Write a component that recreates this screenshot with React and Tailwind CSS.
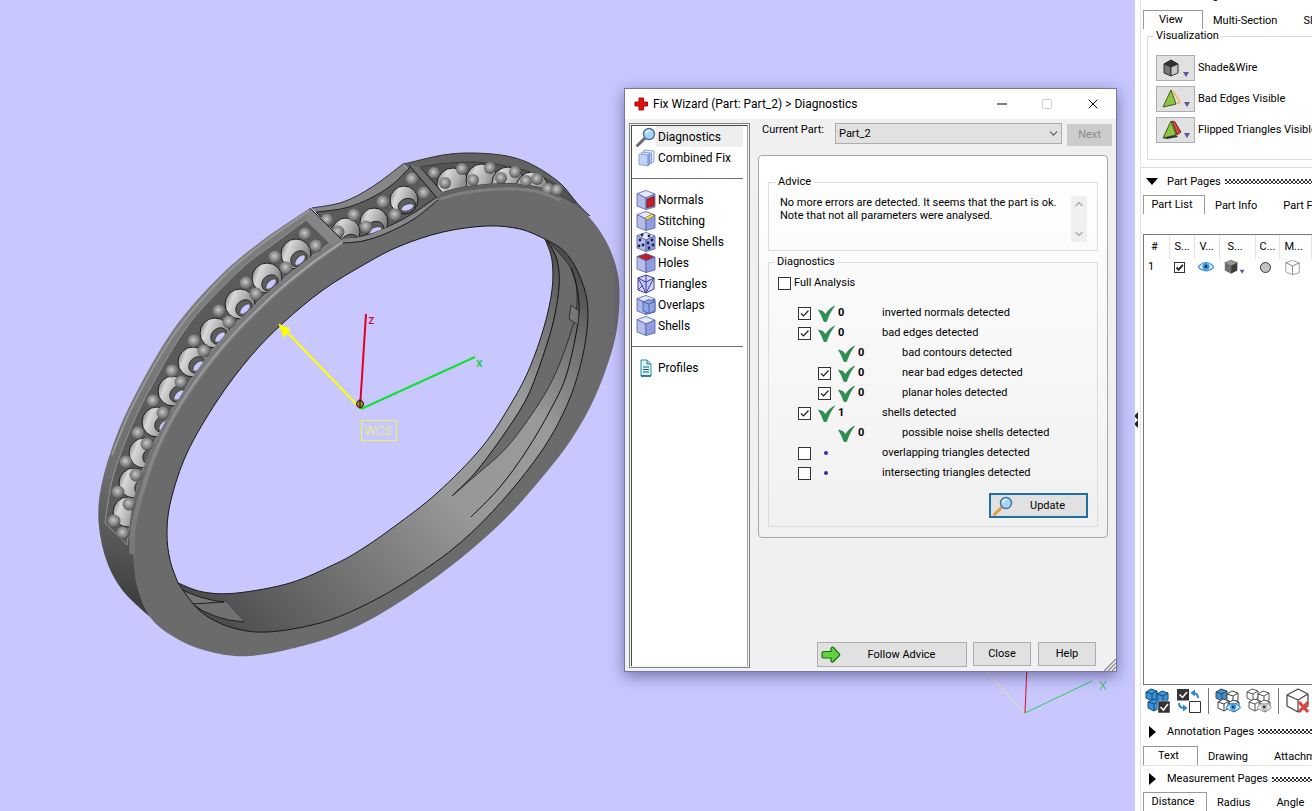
import React, { useState } from "react";
import { ChevronDown, ChevronUp, Minus, Square, X } from "lucide-react";
import clsx from "clsx";

// Smooth cubic segments through a list of [x, y] points
const spline = (pts) => {
  let d = "";
  for (let i = 0; i < pts.length - 1; i++) {
    const p0 = pts[i - 1] || pts[i];
    const p1 = pts[i];
    const p2 = pts[i + 1];
    const p3 = pts[i + 2] || p2;
    d += `C${p1[0] + (p2[0] - p0[0]) / 6} ${p1[1] + (p2[1] - p0[1]) / 6} ${p2[0] - (p3[0] - p1[0]) / 6} ${p2[1] - (p3[1] - p1[1]) / 6} ${p2[0]} ${p2[1]}`;
  }
  return d;
};

const open = (...parts) => `M${parts[0][0].join(" ")}` + parts.map((p, i) => (i ? `L${p[0].join(" ")}` : "") + spline(p)).join("");
const closed = (...parts) => open(...parts) + "Z";

const silhouetteLeft = [[150, 617], [123, 591], [107, 562], [99, 527], [100, 493], [111, 451], [132, 401], [173, 330], [220, 276], [263, 240], [310, 208]];
const scallopTop = [[312, 208], [343, 202], [372, 187], [403, 164]];
const silhouetteTop = [[408, 163], [443, 155], [473, 153], [507, 156], [533, 165], [560, 183], [577, 203], [590, 216]];

const faceLeft = [[133, 555], [134, 530], [141, 500], [158, 450], [186, 398], [225, 346], [270, 300], [308, 268], [343, 243]];
const faceScallop = [[343, 243], [363, 241], [387, 233], [414, 219], [438, 200]];
const faceRight = [[438, 200], [463, 192], [500, 188], [535, 190], [567, 202], [588, 216], [607, 243], [618, 275], [619, 310], [613, 347], [595, 397], [571, 440], [540, 480], [504, 520], [460, 559], [412, 594], [360, 625], [310, 644], [250, 656], [207, 651], [174, 637], [150, 617], [137, 586], [133, 555]];

const innerLeft = [[178, 583], [170, 560], [167, 533], [171, 500], [187, 453], [217, 401], [250, 357], [283, 323], [323, 290], [365, 264], [400, 246], [443, 232], [487, 226], [520, 229], [545, 239]];
const innerRight = [[545, 239], [564, 251], [578, 272], [587, 300], [587, 330], [580, 367], [567, 405], [543, 449], [503, 500], [460, 543], [412, 578], [365, 605], [320, 623], [267, 632], [230, 627], [200, 611], [178, 583]];
const backEdge = [[545, 239], [552, 260], [552, 290], [544, 327], [530, 367], [512, 402], [482, 447], [437, 493], [395, 526], [362, 549], [335, 564], [290, 583], [237, 593], [203, 592], [178, 583]];

const grooveA = [[547, 240], [557, 260], [559, 287], [552, 327], [536, 376], [523, 405], [500, 440], [475, 473], [452, 496]];
const grooveB = [[452, 496], [475, 476], [507, 447], [538, 405], [557, 370], [573, 325], [577, 300], [572, 270], [547, 240]];
const grooveC = [[571, 268], [578, 293], [578, 322], [567, 373], [552, 407], [527, 450], [500, 487], [471, 517]];

const channelLeft = closed(
  [[105, 523], [113, 477], [130, 430], [152, 385], [190, 323], [240, 270], [275, 243], [306, 220]],
  [[330, 243], [303, 263], [262, 298], [217, 344], [181, 395], [152, 447], [134, 497], [127, 545]],
);
const channelMid = closed(
  [[316, 212], [345, 208], [371, 198], [393, 184], [411, 166]],
  [[437, 197], [412, 214], [387, 227], [362, 236], [343, 238]],
);
const channelRight = closed(
  [[420, 167], [440, 164], [470, 162], [500, 165], [533, 173], [560, 187], [577, 203]],
  [[573, 202], [547, 189], [510, 183], [467, 186], [442, 192]],
);

const beadsLeft = [[305, 234], [275, 257], [246, 283], [219, 311], [194, 341], [172, 371], [153, 401], [138, 433], [126, 462], [118, 492], [114, 521], [316, 246], [286, 268], [256, 294], [229, 322], [204, 351], [181, 382], [163, 413], [147, 444], [136, 475], [129, 504], [123, 533]];
const beadsMid = [[327, 220], [338, 232], [354, 215], [366, 227], [383, 202], [395, 215], [412, 179], [424, 193]];
const beadsRight = [[434, 173], [445, 183], [462, 169], [473, 180], [490, 168], [501, 178], [515, 172], [526, 181], [537, 179], [548, 189], [557, 190]];

// seat centre, then the drilled hole
const seatsLeft = [[296, 254, 299, 259], [267, 278, 270, 283], [240, 304, 244, 308], [215, 333, 219, 336], [193, 362, 197, 365], [173, 391, 178, 394], [157, 422, 163, 424], [144, 453, 151, 456], [134, 483, 143, 487], [128, 512, 140, 517]];
const seatsMid = [[346, 232, 350, 242], [374, 222, 375, 229], [404, 200, 407, 206]];
const seatsRight = [[453, 184, 451, 200], [482, 180, 482, 200], [508, 183, 508, 200], [532, 188, 534, 202]];

const Seats = ({ seats, r = 14, tilt = -40 }) =>
  seats.map(([x, y, hx, hy]) => (
    <g key={`${x}-${y}`}>
      <circle cx={x} cy={y} r={r} fill="url(#seat)" stroke="#1c1c1c" strokeWidth="1" />
      <g transform={`translate(${hx} ${hy}) rotate(${tilt})`}>
        <ellipse rx="9" ry="7.5" fill="#5c5c5c" stroke="#1c1c1c" strokeWidth="0.8" />
        <ellipse cx="0" cy="1.5" rx="6.5" ry="3.2" fill="#c8c8ff" stroke="#333" strokeWidth="0.6" />
      </g>
    </g>
  ));

const Beads = ({ beads, r = 6.5 }) =>
  beads.map(([x, y]) => <circle key={`${x}-${y}`} cx={x} cy={y} r={r} fill="url(#bead)" />);

const Ring = () => (
  <g>
    <defs>
      <radialGradient id="bead" cx="0.45" cy="0.42" r="0.58">
        <stop offset="0" stopColor="#cccccc" />
        <stop offset="0.35" stopColor="#a0a0a0" />
        <stop offset="0.75" stopColor="#767676" />
        <stop offset="1" stopColor="#4c4c4c" />
      </radialGradient>
      <linearGradient id="seat" x1="0" y1="0.2" x2="1" y2="0.6">
        <stop offset="0" stopColor="#7c7c7c" />
        <stop offset="0.25" stopColor="#d8d8d8" />
        <stop offset="0.6" stopColor="#b0b0b0" />
        <stop offset="1" stopColor="#747474" />
      </linearGradient>
      <linearGradient id="wall" gradientUnits="userSpaceOnUse" x1="190" y1="620" x2="590" y2="250">
        <stop offset="0" stopColor="#474747" />
        <stop offset="0.2" stopColor="#686868" />
        <stop offset="0.5" stopColor="#979797" />
        <stop offset="0.72" stopColor="#9a9a9a" />
        <stop offset="0.88" stopColor="#6c6c6c" />
        <stop offset="1" stopColor="#3c3c3c" />
      </linearGradient>
      <linearGradient id="band" gradientUnits="userSpaceOnUse" x1="130" y1="610" x2="200" y2="330">
        <stop offset="0" stopColor="#3a3a3a" />
        <stop offset="0.2" stopColor="#555555" />
        <stop offset="0.45" stopColor="#6e6e6e" />
        <stop offset="1" stopColor="#7c7c7c" />
      </linearGradient>
      <linearGradient id="rim" gradientUnits="userSpaceOnUse" x1="133" y1="560" x2="300" y2="270">
        <stop offset="0" stopColor="#747474" />
        <stop offset="0.4" stopColor="#929292" />
        <stop offset="1" stopColor="#a8a8a8" />
      </linearGradient>
      <clipPath id="clip-left"><path d={channelLeft} /></clipPath>
      <clipPath id="clip-mid"><path d={channelMid} /></clipPath>
      <clipPath id="clip-right"><path d={channelRight} /></clipPath>
    </defs>

    {/* inside wall */}
    <path d={closed(innerRight) + closed(backEdge)} fillRule="evenodd" fill="url(#wall)" />
    <path d={closed(grooveA, grooveB)} fill="#6b6b6b" />
    <path d={open(grooveA)} fill="none" stroke="#111" strokeWidth="1" />
    <path d={open(grooveB)} fill="none" stroke="#222" strokeWidth="0.8" />
    <path d={open(grooveC)} fill="none" stroke="#111" strokeWidth="1" />
    <path d="M571 305L579 311L578 325L569 319Z" fill="#777" stroke="#222" strokeWidth="0.8" />
    <path d="M179 588Q198 599 224 602L192 604Z" fill="#777" />
    <path d="M192 604L226 602L244 622Q216 621 192 604Z" fill="#717171" />
    <path d="M179 588Q198 599 224 602L192 604Q214 620 244 622" fill="none" stroke="#151515" strokeWidth="0.9" />
    <path d={open(backEdge)} fill="none" stroke="#1b1b1b" strokeWidth="1" />

    {/* outside band */}
    <path d={closed(silhouetteLeft, [[310, 208], [343, 243]], [...faceLeft].reverse())} fill="url(#band)" />
    <path d={closed(scallopTop, [[438, 200], [414, 219], [387, 233], [363, 241], [343, 243]])} fill="#868686" />
    <path d={closed(silhouetteTop, [[588, 216], [567, 202], [535, 190], [500, 188], [463, 192], [438, 200]], [[404, 164], [408, 163]])} fill="#626262" />

    {/* stone channels */}
    <path d={channelLeft} fill="#5b5b5b" stroke="#949494" strokeWidth="1" />
    <path d={channelMid} fill="#5b5b5b" stroke="#222" strokeWidth="1" />
    <path d={channelRight} fill="#555" stroke="#3a3a3a" strokeWidth="1" />
    <g clipPath="url(#clip-left)"><Seats seats={seatsLeft} r={15} tilt={-45} /></g>
    <g clipPath="url(#clip-mid)"><Seats seats={seatsMid} tilt={-20} /></g>
    <g clipPath="url(#clip-right)"><Seats seats={seatsRight} r={16} tilt={0} /></g>
    <Beads beads={beadsLeft} />
    <Beads beads={beadsMid} />
    <Beads beads={beadsRight} r={6} />

    {/* cross bars */}
    <path d="M310 209L343 241L331 245L306 219Z" fill="#858585" />
    <path d="M310 208L342 240" stroke="#1c1c1c" strokeWidth="1" />
    <path d="M408 164L422 168L442 192L438 199Z" fill="#707070" />
    <path d="M409 165L437 198M421 168L442 192" stroke="#1c1c1c" strokeWidth="1" />

    {/* front face */}
    <path d={closed(faceLeft, faceScallop, faceRight) + closed(innerLeft, innerRight)} fillRule="evenodd" fill="#6b6b6b" />
    <path d={open(faceLeft)} transform="translate(-1 -1)" fill="none" stroke="#7c7c7c" strokeWidth="5" />
    <path d={open(faceLeft)} transform="translate(-1 -1)" fill="none" stroke="url(#rim)" strokeWidth="2" />
    <path d={open([[440, 199], [463, 193], [500, 189], [535, 191], [560, 200]])} fill="none" stroke="#7e7e7e" strokeWidth="3" />
    <path d={open([[309, 211], [263, 243], [222, 278], [175, 333], [134, 403], [112, 455]])} fill="none" stroke="#969696" strokeWidth="2" />
    <path d={open(faceScallop)} fill="none" stroke="#151515" strokeWidth="1" />
    <path d={open(scallopTop, silhouetteTop)} fill="none" stroke="#333" strokeWidth="1" />
    <path d={open(innerLeft, innerRight)} fill="none" stroke="#151515" strokeWidth="1" />
  </g>
);

const Viewport = () => (
  <svg className="absolute top-0 left-0 h-[811px] w-[1135px] max-w-none" viewBox="0 0 1135 811" role="img" aria-label="Part_2">
    <Ring />
    <g fill="none" strokeWidth="2">
      <path d="M361 409L283 328" stroke="#ffff00" />
      <path d="M279 324L290 330L284 337Z" fill="#ffff00" stroke="#ffff00" strokeWidth="1" />
      <path d="M361 409L475 357" stroke="#10e030" />
      <path d="M366 314L360 408" stroke="#e00020" />
      <circle cx="360" cy="404" r="3.5" fill="#b8862e" stroke="#111" strokeWidth="1" />
      <path d="M360 399V409" stroke="#111" strokeWidth="1" />
      <rect x="361.5" y="420.5" width="35" height="20" stroke="#f0f060" strokeWidth="1" />
    </g>
    <g fontFamily="Inter, sans-serif" fontSize="12">
      <text x="368" y="324" fill="#d01030" fontWeight="500">z</text>
      <text x="476" y="367" fill="#10c838" fontWeight="500">x</text>
      <text x="282" y="334" fill="#ffff00">y</text>
      <text x="364" y="435" fill="#f0f060" fontWeight="300">WCS</text>
      <text x="1099" y="690" fill="#30c060" fontWeight="300">X</text>
    </g>
    <g strokeWidth="1">
      <path d="M980 665L1025 713" stroke="#e6e6a0" />
      <path d="M1027 665L1025 713" stroke="#d01020" />
      <path d="M1025 713L1092 681" stroke="#30c860" />
    </g>
  </svg>
);

const Cube = ({ className = "h-5 w-5", top = "#e4e9fb", left = "#b3bdec", right = "#8f9ddf", stroke = "#5561a5", children }) => (
  <svg className={clsx("shrink-0", className)} viewBox="0 0 20 20" aria-hidden="true">
    <g stroke={stroke} strokeWidth="0.8" strokeLinejoin="round">
      <path d="M1 3.5L10 0.5L19 4L10 8Z" fill={top} />
      <path d="M1 3.5L10 8V19.5L1 16Z" fill={left} />
      <path d="M19 4L10 8V19.5L19 17Z" fill={right} />
    </g>
    {children}
  </svg>
);

const Magnifier = ({ handle = "#6b6b74" }) => (
  <svg className="h-5 w-5 shrink-0" viewBox="0 0 20 20" aria-hidden="true">
    <path d="M1.5 18.5L9 11" stroke={handle} strokeWidth="3" strokeLinecap="round" />
    <circle cx="13" cy="7" r="5.5" fill="#a9d4f5" stroke="#4a6f9c" strokeWidth="1.4" />
    <path d="M9.5 6.5Q10.5 3.5 14 3.5" stroke="#eef8ff" strokeWidth="1.5" fill="none" />
  </svg>
);

const CombinedIcon = () => (
  <svg className="h-5 w-5 shrink-0" viewBox="0 0 20 20" aria-hidden="true">
    <g stroke="#7f93cc" strokeWidth="0.8" strokeLinejoin="round">
      <path d="M8 2L18 3V13L16 15L8 13Z" fill="#e4ecfc" />
      <path d="M5.5 4L15.500 5V15.5L5.5 15Z" fill="#d3e0f9" />
      <path d="M3 6L12 7V18L3 16.5Z" fill="#c2d4f5" />
      <path d="M12 7L14 5.5V16L12 18Z" fill="#8ba3dc" />
    </g>
  </svg>
);

const NormalsIcon = () => (
  <Cube>
    <path d="M18 6.5L11 9.5V17.5L18 15.5Z" fill="#c81e1e" stroke="#8c1a2c" strokeWidth="1" />
  </Cube>
);

const StitchingIcon = () => (
  <Cube>
    <path d="M9 7L16 3L18 5L11 9Z" fill="#f4e64a" stroke="#8a7b20" strokeWidth="0.8" />
  </Cube>
);

const NoiseIcon = () => (
  <Cube>
    {[[6, 3], [13, 4], [4, 8], [7, 13], [3, 14], [12, 11], [16, 8], [17, 13], [13, 16]].map(([x, y]) => (
      <circle key={`${x}-${y}`} cx={x} cy={y} r="1.4" fill="#1b2146" />
    ))}
  </Cube>
);

const HolesIcon = () => <Cube top="#c01c2e" />;

const TrianglesIcon = () => (
  <svg className="h-5 w-5 shrink-0" viewBox="0 0 20 20" aria-hidden="true">
    <g fill="#d3d6f8" stroke="#3b3d99" strokeWidth="1" strokeLinejoin="round">
      <path d="M2 4L10 1L18 4V15L10 19L2 16Z" />
      <path d="M2 4L10 8L18 4L10 19Z" fill="#bfc4f4" />
      <path d="M10 8V19M10 1V8M2 16L7 11" fill="none" />
    </g>
  </svg>
);

const OverlapsIcon = () => (
  <Cube left="#a9b9ea">
    <path d="M7 7L13 4.5L19 6.5V16L13 18.5L7 16Z" fill="#8ea4e4" stroke="#4757a0" strokeWidth="0.8" />
    <path d="M13 9V18.5M7 7L13 9L19 6.5" fill="none" stroke="#4757a0" strokeWidth="0.8" />
  </Cube>
);

const ProfilesIcon = () => (
  <svg className="h-5 w-5 shrink-0" viewBox="0 0 20 20" aria-hidden="true">
    <path d="M5 2H11L15 6V18H5Z" fill="#d8f6fa" stroke="#2b8796" />
    <path d="M11 2V6H15" fill="#9bdde6" stroke="#2b8796" />
    <path d="M15 18H5" stroke="#1f6a78" strokeWidth="1.5" />
    <path d="M7 9H13M7 11.500H13M7 14H13" stroke="#1d5c78" strokeWidth="1.2" />
  </svg>
);

const navItems = [
  { label: "Diagnostics", icon: Magnifier },
  { label: "Combined Fix", icon: CombinedIcon },
  null,
  { label: "Normals", icon: NormalsIcon },
  { label: "Stitching", icon: StitchingIcon },
  { label: "Noise Shells", icon: NoiseIcon },
  { label: "Holes", icon: HolesIcon },
  { label: "Triangles", icon: TrianglesIcon },
  { label: "Overlaps", icon: OverlapsIcon },
  { label: "Shells", icon: Cube },
  null,
  { label: "Profiles", icon: ProfilesIcon },
];

const diagnostics = [
  { label: "inverted normals detected", count: 0, checked: true },
  { label: "bad edges detected", count: 0, checked: true },
  { label: "bad contours detected", count: 0, nested: true, noBox: true },
  { label: "near bad edges detected", count: 0, nested: true, checked: true },
  { label: "planar holes detected", count: 0, nested: true, checked: true },
  { label: "shells detected", count: 1, checked: true },
  { label: "possible noise shells detected", count: 0, nested: true, noBox: true },
  { label: "overlapping triangles detected", checked: false },
  { label: "intersecting triangles detected", checked: false },
];

const CheckBox = ({ id, checked, label, small }) => (
  <span className={clsx("relative inline-block shrink-0", small ? "h-[11px] w-[11px]" : "h-[13px] w-[13px]")}>
    <input
      id={id}
      type="checkbox"
      defaultChecked={checked}
      aria-label={label}
      className="peer block h-full w-full appearance-none border border-[#333333] bg-white"
    />
    <svg className="pointer-events-none absolute inset-0 hidden h-full w-full peer-checked:block" viewBox="0 0 13 13" aria-hidden="true">
      <path d="M3 6.5L5.5 9L10.5 3.5" fill="none" stroke="#222" strokeWidth={small ? 2.2 : 1.2} />
    </svg>
  </span>
);

const GreenCheck = () => (
  <svg className="h-[17px] w-[17px]" viewBox="0 0 17 17" aria-hidden="true">
    <path d="M0.5 5L5 6.5L7.5 9.5Q11 3.5 16.5 1Q11 8 8.5 16.5H6Q4 10 0.5 5Z" fill="#2a9150" stroke="#1a7038" strokeWidth="0.6" />
  </svg>
);

const DiagnosticRow = ({ item, index }) => {
  const id = `diag-${index}`;
  return (
    <div className={clsx("flex h-5 items-center", item.nested ? "pl-[49px]" : "pl-[29px]")}>
      <span className="flex w-5">{!item.noBox && <CheckBox id={id} checked={item.checked} label={item.label} />}</span>
      <span className="flex w-5">
        {item.count === undefined ? <span className="ml-[6px] h-1 w-1 rounded-full bg-[#3030b0]" /> : <GreenCheck />}
      </span>
      <b className="w-11">{item.count}</b>
      {item.noBox ? <span>{item.label}</span> : <label htmlFor={id}>{item.label}</label>}
    </div>
  );
};

const ActionButton = ({ className, children }) => (
  <button type="button" className={clsx("flex items-center justify-center border border-[#adadad] bg-[#e1e1e1]", className)}>
    {children}
  </button>
);

const FixWizard = () => {
  const [active, setActive] = useState("Diagnostics");

  return (
    <section
      aria-label="Fix Wizard"
      className="absolute top-[88px] left-[624px] flex h-[584px] w-[493px] flex-col border border-[#7476a8] bg-[#f0f0f0] shadow-[0_4px_14px_rgba(30,30,80,0.5)]"
    >
      <header className="flex h-[30px] shrink-0 items-center bg-white pl-2 text-xs">
        <svg className="mr-1 h-4 w-4" viewBox="0 0 16 16" aria-hidden="true">
          <path d="M6 2H10.5V6H14.5V10H10.5V14H6V10H2V6H6Z" fill="#dd1111" stroke="#a80c0c" strokeLinejoin="round" />
        </svg>
        <h1 className="grow">Fix Wizard (Part: Part_2) &gt; Diagnostics</h1>
        <button type="button" aria-label="Minimize" className="flex w-[45px] justify-center"><Minus className="h-4 w-4" strokeWidth={1.5} /></button>
        <button type="button" aria-label="Maximize" className="flex w-[45px] justify-center text-[#cccccc]"><Square className="h-3 w-3" strokeWidth={2} /></button>
        <button type="button" aria-label="Close window" className="flex w-[47px] justify-center"><X className="h-4 w-4" strokeWidth={1.5} /></button>
      </header>

      <div className="flex min-h-0 grow pt-1 pb-[3px] pl-1">
        <nav className="w-[121px] shrink-0 border border-[#828282] p-px">
          <ul className="h-full border-t border-r border-l border-t-[#4b4b4b] border-r-[#a0a0a0] border-l-[#4b4b4b] bg-white pr-1">
            {navItems.map((item, i) =>
              item ? (
                <li key={item.label} className="h-[21px]">
                  <button
                    type="button"
                    onClick={() => setActive(item.label)}
                    className="flex h-full w-full items-center pl-1 text-left text-xs"
                  >
                    <item.icon />
                    <span className={clsx("flex h-full grow items-center pl-[2px]", active === item.label && "bg-[#eeeeee]")}>{item.label}</span>
                  </button>
                </li>
              ) : (
                <li key={i} className="flex h-[21px] items-center">
                  <hr className="w-full border-[#6e6e6e]" />
                </li>
              ),
            )}
          </ul>
        </nav>

        <div className="flex grow flex-col px-2">
          <div className="flex h-[24px] items-start pl-1">
            <label htmlFor="current-part" className="w-[73px]">Current Part:</label>
            <div className="relative grow">
              <select id="current-part" className="block h-[21px] w-full appearance-none border border-[#adadad] bg-[#e1e1e1] pl-[3px]">
                <option>Part_2</option>
              </select>
              <ChevronDown className="pointer-events-none absolute top-1 right-0.5 h-[13px] w-[13px] text-[#555555]" strokeWidth={2} />
            </div>
            <button type="button" disabled className="mt-px -mr-1 ml-[5px] h-[22px] w-[45px] bg-[#cccccc] text-[#8a8a8a]">Next</button>
          </div>

          <div className="mt-2 rounded-[4px] border border-[#a8a8a8] bg-linear-to-b from-white to-[#f0f0f0] px-[9px] pt-[19px] pb-[10px]">
            <fieldset className="h-[76px] border border-[#dcdcdc] pr-[10px] pl-[11px]">
              <legend className="-ml-1 px-[2px]">Advice</legend>
              <div className="mt-[7px] flex justify-between">
                <p className="leading-[13px] whitespace-nowrap">
                  No more errors are detected. It seems that the part is ok.
                  <br />
                  Note that not all parameters were analysed.
                </p>
                <div className="flex h-[46px] w-4 shrink-0 flex-col items-center justify-between bg-[#f0f0f0] py-0.5 text-[#b0b0b0]">
                  <ChevronUp className="h-3 w-3" strokeWidth={3} />
                  <ChevronDown className="h-3 w-3" strokeWidth={3} />
                </div>
              </div>
            </fieldset>

            <fieldset className="mt-1 border border-[#dcdcdc] pb-2">
              <legend className="ml-[6px] px-[2px]">Diagnostics</legend>
              <div className="mt-px flex h-[26px] items-center gap-[3px] pl-[9px]">
                <CheckBox id="full-analysis" checked={false} label="Full Analysis" />
                <label htmlFor="full-analysis">Full Analysis</label>
              </div>
              <div className="mt-[7px]">
                {diagnostics.map((item, i) => (
                  <DiagnosticRow key={item.label} item={item} index={i} />
                ))}
              </div>
              <div className="mt-[10px] mr-[9px] flex justify-end">
                <button type="button" className="flex h-[25px] w-[99px] items-center border-2 border-[#1f6f9f] bg-[#e1e1e1] pl-[2px]">
                  <Magnifier handle="#e0a040" />
                  <span className="grow pr-1 text-center">Update</span>
                </button>
              </div>
            </fieldset>
          </div>

          <div className="mt-auto mr-3 mb-px flex h-[25px] justify-end">
            <ActionButton className="mr-[6px] h-[25px] w-[150px] pl-[3px]">
              <svg className="h-5 w-5" viewBox="0 0 20 20" aria-hidden="true">
                <path d="M1 8Q1 6.5 2.5 6.5H10V3.500Q11 1.5 12.500 2.5L18.500 9Q19 10 18.5 10.5L12.500 16.5Q11 18 10 16V13H2.5Q1 13 1 12Z" fill="#5fd33c" stroke="#1f6b1c" strokeWidth="1.2" />
              </svg>
              <span className="grow pr-1 text-center">Follow Advice</span>
            </ActionButton>
            <ActionButton className="mr-[7px] h-6 w-[58px]">Close</ActionButton>
            <ActionButton className="h-6 w-[58px]">Help</ActionButton>
          </div>
        </div>
      </div>

      <svg className="absolute right-0 bottom-0 h-3 w-3" viewBox="0 0 12 12" aria-hidden="true">
        <path d="M0 12L12 0M4 12L12 4M8 12L12 8" stroke="#808080" strokeWidth="1.2" />
      </svg>
    </section>
  );
};

const Section = ({ title, open: isOpen, className }) => (
  <div className={clsx("flex items-center pl-[5px]", className)}>
    <svg className="mr-[9px] h-3 w-3 shrink-0" viewBox="0 0 12 12" aria-hidden="true">
      <path d={isOpen ? "M0 2H12L6 9Z" : "M3 0V12L10 6Z"} fill="#000" />
    </svg>
    <h2 className="mr-1 whitespace-nowrap">{title}</h2>
    <span className="h-[5px] grow bg-[radial-gradient(circle_at_1px_1px,#333_1px,transparent_1px),radial-gradient(circle_at_3px_3px,#333_1px,transparent_1px)] bg-size-[4px_4px]" />
  </div>
);

const Tabs = ({ tabs, width, className }) => (
  <div role="tablist" className={clsx("flex h-[19px] pl-[2px] whitespace-nowrap", className)}>
    {tabs.map((tab, i) => (
      <button
        key={tab}
        type="button"
        role="tab"
        aria-selected={i === 0}
        className={clsx("shrink-0", i === 0 ? ["border border-b-0 border-[#999999] pr-1", width] : "pt-0.5 pr-[16px] pl-[10px]")}
      >
        {tab}
      </button>
    ))}
  </div>
);

const DropMark = () => <path d="M22 13H28L25 18Z" fill="#5a55a0" />;

const ShadeIcon = () => (
  <svg className="h-5 w-7" viewBox="1 -1 28 20" aria-hidden="true">
    <path d="M3 5L10 1L17 5L10 8Z" fill="#333" stroke="#222" />
    <path d="M3 5L10 8V17L3 14Z" fill="#777" stroke="#333" />
    <path d="M17 5L10 8V17L17 14Z" fill="#c8c8c8" stroke="#333" />
    <DropMark />
  </svg>
);

const BadEdgesIcon = () => (
  <svg className="h-5 w-7" viewBox="0 0 28 20" aria-hidden="true">
    <path d="M11 2L18 13L15 15" fill="none" stroke="#f4b860" strokeWidth="1.6" />
    <path d="M9 1L14 15L1 18Z" fill="#8cc63f" stroke="#3c5a20" />
    <DropMark />
  </svg>
);

const FlippedIcon = () => (
  <svg className="h-5 w-7" viewBox="0 0 28 20" aria-hidden="true">
    <path d="M10 1L13 2L19 12L15 15Z" fill="#d04a3a" stroke="#7a2a20" />
    <path d="M9 1L14 15L1 18Z" fill="#8cc63f" stroke="#3c5a20" />
    <path d="M1 18L14 15L16 17L5 19Z" fill="#333" />
    <DropMark />
  </svg>
);

const viewOptions = [
  { label: "Shade&Wire", icon: ShadeIcon },
  { label: "Bad Edges Visible", icon: BadEdgesIcon },
  { label: "Flipped Triangles Visible", icon: FlippedIcon },
];

const BlockIcon = ({ x, y, fill, stroke }) => (
  <g transform={`translate(${x} ${y})`} fill={fill} stroke={stroke} strokeWidth="1" strokeLinejoin="round">
    <path d="M0 3L5 0L11 2V9L6 12L0 9Z" />
    <path d="M0 3L6 5L11 2M6 5V12" fill="none" />
  </g>
);

const Blocks = ({ first, rest, stroke, children }) => (
  <svg className="h-[26px] w-[26px]" viewBox="0 0 26 26" aria-hidden="true">
    <BlockIcon x={1} y={1} fill={first} stroke={stroke} />
    <BlockIcon x={12} y={3} fill={rest} stroke={stroke} />
    <BlockIcon x={3} y={11} fill={rest} stroke={stroke} />
    <BlockIcon x={13} y={12} fill={rest} stroke={stroke} />
    {children}
  </svg>
);

const Eye = ({ color, pale }) => (
  <>
    <path d="M0 6Q8 -3 16 6Q8 14 0 6Z" fill={pale} stroke={color} strokeWidth="1.2" />
    <circle cx="8" cy="5.5" r="3.5" fill={color} />
    <circle cx="8" cy="5.5" r="1.3" fill="#112233" />
  </>
);

const PartToolbar = () => (
  <div className="flex h-8 items-center gap-[5px] pl-1">
    <button type="button" aria-label="Select all">
      <Blocks first="#3a93d8" rest="#3a93d8" stroke="#174a78">
        <path d="M13 13H25V25H13Z" fill="#333" stroke="#fff" strokeWidth="0.5" />
        <path d="M15.5 19L18.500 22L23 16" fill="none" stroke="#fff" strokeWidth="1.5" />
      </Blocks>
    </button>
    <button type="button" aria-label="Invert selection">
      <svg className="h-[26px] w-[26px]" viewBox="0 0 26 26" aria-hidden="true">
        <path d="M1 1H13V12.5H1Z" fill="#333" />
        <path d="M3.5 6.5L6.500 9.5L11 4" fill="none" stroke="#fff" strokeWidth="1.5" />
        <path d="M13.5 13.5H24.5V24.5H13.5Z" fill="#fff" stroke="#333" />
        <path d="M22 10Q22 5 17 5M3 15Q3 20 8 20" fill="none" stroke="#2d86c8" strokeWidth="2" />
        <path d="M19 1.500L14.500 5L19 8.500ZM7 16.500L11.500 20L7 23.500Z" fill="#2d86c8" />
      </svg>
    </button>
    <span className="mx-px h-[26px] w-px bg-[#777777]" />
    <button type="button" aria-label="Show selected">
      <Blocks first="#3a93d8" rest="#ffffff" stroke="#444">
        <g transform="translate(11 14) scale(0.9)"><Eye color="#3a9be0" pale="#e4f3ff" /></g>
      </Blocks>
    </button>
    <button type="button" aria-label="Hide selected">
      <Blocks first="#ffffff" rest="#ffffff" stroke="#555">
        <g transform="translate(11 14) scale(0.9)"><Eye color="#b8b8b8" pale="#f0f0f0" /></g>
      </Blocks>
    </button>
    <span className="mx-px h-[26px] w-px bg-[#777777]" />
    <button type="button" aria-label="Delete part">
      <svg className="h-[26px] w-[26px]" viewBox="0 0 26 26" aria-hidden="true">
        <path d="M2 7L13 1L23 6V18L13 24L2 18ZM2 7L13 12L23 6M13 12V24" fill="#fff" stroke="#444" strokeWidth="1.2" strokeLinejoin="round" />
        <path d="M14 14L23 24M23 14L14 24" stroke="#e04040" strokeWidth="3" />
      </svg>
    </button>
  </div>
);

const headCell = "h-[24px] overflow-hidden border-r border-[#e4e4e4] p-0 text-left font-normal whitespace-nowrap";

const PartTable = () => (
  <div className="ml-[2px] h-[451px] border border-r-0 border-[#777777] bg-white">
    <table className="w-[184px] table-fixed border-collapse">
      <thead>
        <tr>
          <th className={clsx(headCell, "w-[25px] pl-[7px]")}>#</th>
          <th className={clsx(headCell, "w-[25px] pl-[5px]")}>S...</th>
          <th className={clsx(headCell, "w-[25px] pl-[5px]")}>V...</th>
          <th className={clsx(headCell, "w-[36px] pl-[8px]")}>S...</th>
          <th className={clsx(headCell, "w-[24px] pl-[4px]")}>C...</th>
          <th className={clsx(headCell, "w-[32px] pl-[5px]")}>M...</th>
          <th aria-label="More" className="w-[17px]" />
        </tr>
      </thead>
      <tbody>
        <tr className="h-[16px]">
          <td className="pl-1">1</td>
          <td className="pl-[5px]"><div className="flex"><CheckBox small checked label="Selected" /></div></td>
          <td className="pl-1">
            <svg className="h-3 w-4" viewBox="0 0 16 12" aria-hidden="true"><Eye color="#3a93d8" pale="#d8ecfa" /></svg>
          </td>
          <td className="pl-[5px]">
            <svg className="h-4 w-[22px]" viewBox="2 0 28 19" aria-hidden="true">
              <path d="M3 4L11 1L19 4L11 8Z" fill="#999" stroke="#666" />
              <path d="M3 4L11 8V18L3 14Z" fill="#6e6e6e" />
              <path d="M19 4L11 8V18L19 14Z" fill="#3c3c3c" />
              <DropMark />
            </svg>
          </td>
          <td className="pl-[5px]"><span className="block h-[11px] w-[11px] rounded-full border border-[#333333] bg-[#c4c4c4]" /></td>
          <td className="pl-[6px]"><Cube className="h-[15px] w-[15px]" top="#fff" left="#fff" right="#fff" stroke="#666" /></td>
          <td />
        </tr>
      </tbody>
    </table>
  </div>
);

const SidePanel = () => (
  <aside className="flex h-full w-[177px] shrink-0 overflow-hidden bg-white">
    <div className="flex w-[6px] shrink-0 items-center border-r border-[#e4e4e4] pt-7">
      <svg className="-ml-px h-4 w-[5px]" viewBox="0 0 5 16" aria-hidden="true">
        <path d="M0 4L4 0V8ZM0 12L4 8V16Z" fill="#222" />
      </svg>
    </div>
    <div className="w-[190px] shrink-0">
      <div className="flex h-[3px] items-end overflow-hidden pl-8">
        <h2 className="leading-[14px]">View Pages</h2>
      </div>
      <Tabs className="mt-[7px]" tabs={["View", "Multi-Section", "Slices"]} width="w-[60px]" />
      <fieldset className="ml-[6px] h-[131px] border border-r-0 border-[#dcdcdc] pl-[8px]">
        <legend className="-ml-0.5 px-[2px]">Visualization</legend>
        <div className="mt-[12px] flex flex-col gap-[5px]">
          {viewOptions.map((opt) => (
            <div key={opt.label} className="flex items-center gap-[3px] whitespace-nowrap">
              <button type="button" aria-label={opt.label} className="flex h-[26px] w-[39px] items-center justify-center border border-[#adadad] bg-[#e1e1e1]">
                <opt.icon />
              </button>
              <span>{opt.label}</span>
            </div>
          ))}
        </div>
      </fieldset>
      <hr className="mt-[7px] border-[#dddddd]" />
      <Section title="Part Pages" open className="h-[27px]" />
      <Tabs tabs={["Part List", "Part Info", "Part Fixing"]} width="w-[62px]" />
      <div className="h-5" />
      <PartTable />
      <PartToolbar />
      <Section title="Annotation Pages" className="h-[29px]" />
      <Tabs tabs={["Text", "Drawing", "Attachment"]} width="w-[55px]" />
      <hr className="border-[#e4e4e4]" />
      <Section title="Measurement Pages" className="h-[26px]" />
      <Tabs tabs={["Distance", "Radius", "Angle"]} width="w-[64px]" />
    </div>
  </aside>
);

export default function App() {
  return (
    <div className="flex h-screen overflow-hidden bg-white font-['Roboto',sans-serif] text-[11px] leading-[14px] text-black">
      <main className="relative min-w-0 grow overflow-hidden bg-[#c8c8ff]">
        <Viewport />
        <FixWizard />
      </main>
      <SidePanel />
    </div>
  );
}
